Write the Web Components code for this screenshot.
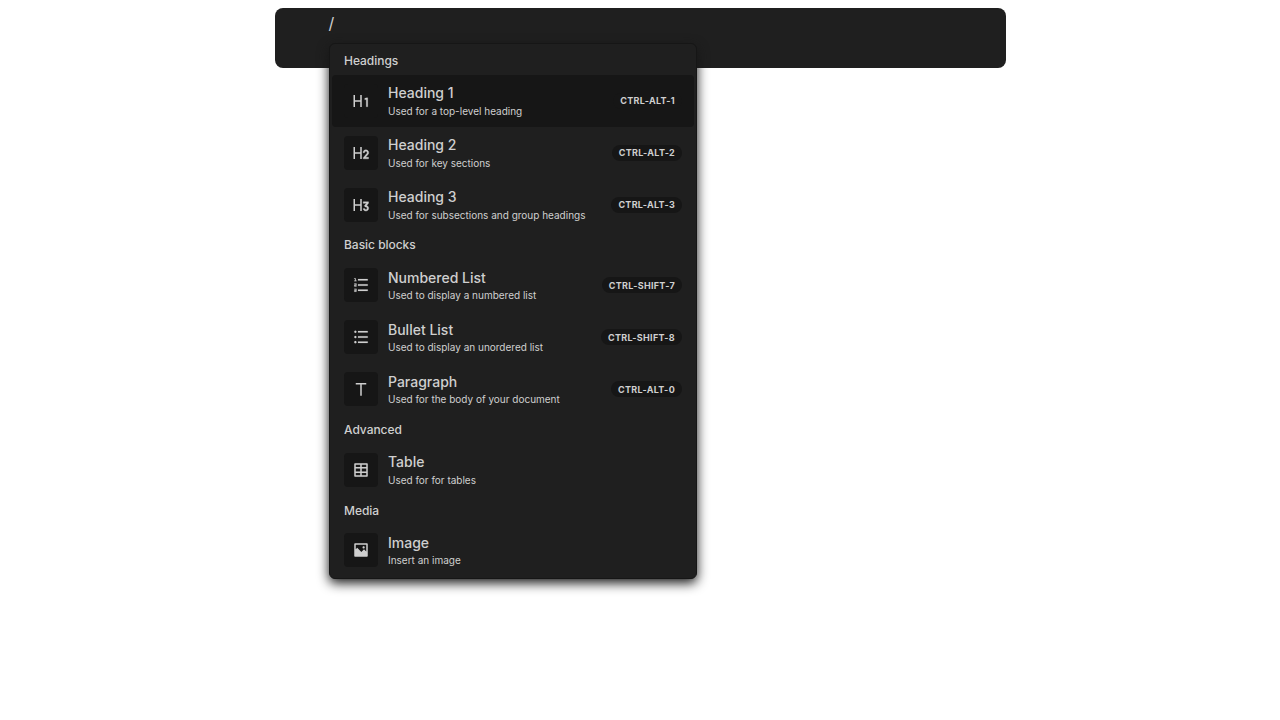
<!DOCTYPE html>
<html lang="en">
<head>
<meta charset="utf-8">
<title>Editor</title>
<style>
html { height: 100%; background: #fff; }
body { box-sizing: border-box; min-height: 720px; margin: 0; padding: 8px 274px 0 275px; font-family: Inter, "Liberation Sans", sans-serif; color: #cfcfcf; -webkit-font-smoothing: antialiased; }
</style>
</head>
<body>
<block-editor>/
  <slash-menu slot="menu">
    <menu-label>Headings</menu-label>
    <menu-item selected icon="h1" heading="Heading 1" hint="Used for a top-level heading" keys="Ctrl-Alt-1"></menu-item>
    <menu-item icon="h2" heading="Heading 2" hint="Used for key sections" keys="Ctrl-Alt-2"></menu-item>
    <menu-item icon="h3" heading="Heading 3" hint="Used for subsections and group headings" keys="Ctrl-Alt-3"></menu-item>
    <menu-label>Basic blocks</menu-label>
    <menu-item icon="ordered" heading="Numbered List" hint="Used to display a numbered list" keys="Ctrl-Shift-7"></menu-item>
    <menu-item icon="bullet" heading="Bullet List" hint="Used to display an unordered list" keys="Ctrl-Shift-8"></menu-item>
    <menu-item icon="text" heading="Paragraph" hint="Used for the body of your document" keys="Ctrl-Alt-0"></menu-item>
    <menu-label>Advanced</menu-label>
    <menu-item icon="table" heading="Table" hint="Used for for tables"></menu-item>
    <menu-label>Media</menu-label>
    <menu-item icon="image" heading="Image" hint="Insert an image"></menu-item>
  </slash-menu>
</block-editor>
<script>
const H = '<path d="M13 20H11V13H4V20H2V4H4V11H11V4H13V20Z"/>';
const digit = (d, width) => `${H}<path stroke="currentColor" stroke-width="${width}" transform="translate(0 -0.25)" d="${d}"/>`;
const glyph = (d, width = 0) => `<path stroke="currentColor" stroke-width="${width}" d="${d}"/>`;

const ICONS = {
  h1: digit('M21.0005 8V20H19.0005L19 10.204L17 10.74V8.67L19.5005 8H21.0005Z', 0.3),
  h2: digit('M18.5 8C20.5711 8 22.25 9.67893 22.25 11.75C22.25 12.6074 21.9623 13.3976 21.4781 14.0292L21.3302 14.2102L18.0343 18H22V20H15L14.9993 18.444L19.8207 12.8981C20.0881 12.5908 20.25 12.1893 20.25 11.75C20.25 10.7835 19.4665 10 18.5 10C17.5818 10 16.8288 10.7071 16.7558 11.6065L16.75 11.75H14.75C14.75 9.67893 16.4289 8 18.5 8Z', 0.5),
  h3: digit('M22 8L21.9984 10L19.4934 12.883C21.0823 13.3184 22.25 14.7728 22.25 16.5C22.25 18.5711 20.5711 20.25 18.5 20.25C16.674 20.25 15.1528 18.9449 14.8184 17.2166L16.7821 16.8352C16.9384 17.6413 17.6481 18.25 18.5 18.25C19.4665 18.25 20.25 17.4665 20.25 16.5C20.25 15.5335 19.4665 14.75 18.5 14.75C18.214 14.75 17.944 14.8186 17.7056 14.9403L16.3992 13.3932L19.3484 10H15V8H22Z', 0.5),
  ordered: glyph('M8 4H21V6H8V4ZM5 3V6H6V7H3V6H4V4H3V3H5ZM3 14V11.5H5V11H3V10H6V12.5H4V13H6V14H3ZM5 19.5H3V18.5H5V18H3V17H6V21H3V20H5V19.5ZM8 11H21V13H8V11ZM8 18H21V20H8V18Z', 0.2),
  bullet: glyph('M8 4H21V6H8V4ZM4.5 6.5C3.67 6.5 3 5.83 3 5S3.67 3.5 4.5 3.5 6 4.17 6 5 5.33 6.5 4.5 6.5ZM4.5 13.5C3.67 13.5 3 12.83 3 12S3.67 10.5 4.5 10.5 6 11.17 6 12 5.33 13.5 4.5 13.5ZM4.5 20.4C3.67 20.4 3 19.73 3 18.9S3.67 17.4 4.5 17.4 6 18.07 6 18.9 5.33 20.4 4.5 20.4ZM8 11H21V13H8V11ZM8 18H21V20H8V18Z', 0.2),
  text: glyph('M13 6V21H11V6H5V4H19V6H13Z'),
  table: glyph('M13 10V14H19V10H13ZM11 10H5V14H11V10ZM13 19H19V16H13V19ZM11 19V16H5V19H11ZM13 5V8H19V5H13ZM11 5H5V8H11V5ZM4 3H20C20.5523 3 21 3.44772 21 4V20C21 20.5523 20.5523 21 20 21H4C3.44772 21 3 20.5523 3 20V4C3 3.44772 3.44772 3 4 3Z', 0.1),
  image: glyph('M5 11.1005L7 9.1005L12.5 14.6005L16 11.1005L19 14.1005V5H5V11.1005ZM4 3H20C20.5523 3 21 3.44772 21 4V20C21 20.5523 20.5523 21 20 21H4C3.44772 21 3 20.5523 3 20V4C3 3.44772 3.44772 3 4 3ZM15.5 10C14.6716 10 14 9.32843 14 8.5C14 7.67157 14.6716 7 15.5 7C16.3284 7 17 7.67157 17 8.5C17 9.32843 16.3284 10 15.5 10Z')
};

customElements.define('block-editor', class extends HTMLElement {
  constructor() {
    super();
    this.attachShadow({ mode: 'open' }).innerHTML = `
      <style>
        :host { display: block; position: relative; box-sizing: border-box; height: 60px; padding: 3px 53.5px; border-radius: 8px; background: #1f1f1f; font-size: 16px; line-height: 24px; }
        .popup { position: absolute; top: 35px; left: 54px; }
      </style>
      <slot></slot>
      <div class="popup"><slot name="menu"></slot></div>`;
  }
});

customElements.define('slash-menu', class extends HTMLElement {
  constructor() {
    super();
    this.attachShadow({ mode: 'open' }).innerHTML = `
      <style>
        :host { display: block; box-sizing: border-box; width: 368px; padding: 2px; border: 1px solid #161616; border-radius: 6px; background: #1f1f1f; box-shadow: 0 4px 12px #161616; }
      </style>
      <slot></slot>`;
  }
});

customElements.define('menu-label', class extends HTMLElement {
  constructor() {
    super();
    this.attachShadow({ mode: 'open' }).innerHTML = `
      <style>
        :host { display: block; padding: 5.8px 12px 4.2px; font-size: 12px; font-weight: 500; line-height: 18.6px; letter-spacing: -0.03px; }
      </style>
      <slot></slot>`;
  }
});

customElements.define('menu-item', class extends HTMLElement {
  connectedCallback() {
    const keys = this.getAttribute('keys');
    this.attachShadow({ mode: 'open' }).innerHTML = `
      <style>
        :host { display: flex; align-items: center; gap: 10px; box-sizing: border-box; height: 52px; padding: 8px 12px; border-radius: 4px; }
        :host([selected]) { background: #161616; }
        .icon { display: flex; align-items: center; justify-content: center; width: 34px; height: 34px; border-radius: 4px; background: #161616; }
        svg { display: block; width: 18px; height: 18px; fill: currentColor; }
        .body { flex: 1; }
        .title { padding-top: 0.5px; margin-bottom: -0.5px; font-size: 14px; font-weight: 500; line-height: 20px; }
        .hint { font-size: 10px; line-height: 16px; letter-spacing: -0.005px; }
        .keys { box-sizing: border-box; height: 16px; padding: 0.5px 7px 0; border-radius: 16px; background: #161616; font-size: 9px; font-weight: 700; line-height: 16px; letter-spacing: 0.3px; text-transform: uppercase; }
      </style>
      <div class="icon"><svg viewBox="0 0 24 24">${ICONS[this.getAttribute('icon')]}</svg></div>
      <div class="body">
        <div class="title">${this.getAttribute('heading')}</div>
        <div class="hint">${this.getAttribute('hint')}</div>
      </div>
      ${keys ? `<div class="keys">${keys}</div>` : ''}`;
  }
});
</script>
</body>
</html>
